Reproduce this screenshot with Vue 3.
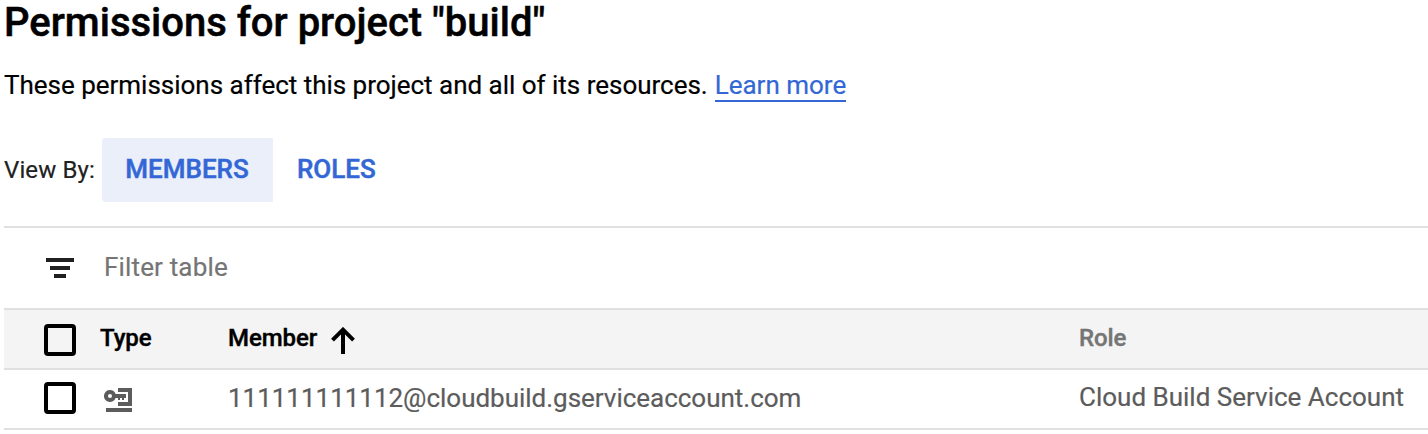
<script setup>
const rows = [
  { member: '111111111112@cloudbuild.gserviceaccount.com', role: 'Cloud Build Service Account' },
]
</script>

<template>
  <main class="page">
    <h1 class="title"><span>Permissions for project "build"</span></h1>
    <p class="intro">
      <span class="intro-text">These permissions affect this project and all of its resources.</span>
      <a class="learn">Learn more</a>
    </p>
    <div class="view">
      <span class="view-label">View By:</span>
      <button class="tab active"><span>MEMBERS</span></button>
      <button class="tab"><span>ROLES</span></button>
    </div>
    <section class="table">
      <div class="filter">
        <svg class="filter-icon" width="28" height="20" viewBox="0 0 28 20">
          <path d="M0 0h28v4H0zM4 8h20v4H4zM8 16h12v4H8z" fill="#212121" />
        </svg>
        <span class="filter-text">Filter table</span>
      </div>
      <div class="row head">
        <span class="check"></span>
        <span class="type">Type</span>
        <span class="member"><span class="member-text">Member</span>
          <svg class="arrow" width="24" height="27" viewBox="0 0 24 27">
            <path d="M12 27V3M1.500 13.200L12 2.700l10.500 10.500" fill="none" stroke="#000" stroke-width="4" />
          </svg>
        </span>
        <span class="role">Role</span>
      </div>
      <div v-for="r in rows" :key="r.member" class="row body">
        <span class="check"></span>
        <span class="type">
          <svg class="key" width="28" height="24" viewBox="0 0 28 24">
            <path d="M14 0h14v18H14v-4h10V4H14zM2 20h26v4H2z" fill="#5c5c5c" />
            <path fill-rule="evenodd" d="M6 2a6 6 0 0 1 5.600 4H22v4h-2v2h-2v-2h-2v2h-2v-2h-2.400A6 6 0 1 1 6 2zM6 6a2 2 0 1 0 0 4 2 2 0 0 0 0-4z" fill="#5c5c5c" />
          </svg>
        </span>
        <span class="member email">{{ r.member }}</span>
        <span class="role">{{ r.role }}</span>
      </div>
    </section>
  </main>
</template>

<style>
body {
  background: #fff;
}
</style>

<style scoped>
.page {
  box-sizing: border-box;
  height: 434px;
  padding-left: 4px;
  overflow: hidden;
  font-family: Roboto, "Liberation Sans", sans-serif;
  font-size: 26px;
  color: #000;
  white-space: nowrap;
  -webkit-text-stroke: 0.2px currentColor;
}
.title {
  margin: 0;
  height: 62px;
  font-size: 40px;
  line-height: 46px;
  font-weight: 500;
  -webkit-text-stroke-width: 0.5px;
}
.intro {
  display: flex;
  align-items: flex-start;
  gap: 7px;
  margin: 0;
  height: 76px;
  line-height: 47px;
}
.intro-text {
  letter-spacing: -0.016px;
}
.learn {
  margin-top: 9px;
  line-height: 29px;
  border-bottom: 2px solid #3367d6;
  color: #3367d6;
}
.view {
  display: flex;
  align-items: center;
  height: 64px;
  margin-bottom: 24px;
}
.view-label {
  width: 98px;
  font-size: 24px;
  letter-spacing: 0.12px;
  color: #212121;
}
.tab {
  height: 64px;
  padding: 0 24px 2px;
  border: 0;
  background: none;
  font: 500 26px Roboto, sans-serif;
  color: #3367d6;
  -webkit-text-stroke: 0.5px #3367d6;
}
.tab.active {
  width: 171px;
  padding: 0 1px 2px 0;
  border-radius: 4px 0 0 4px;
  background: #ebeffa;
}
.table {
  border-top: 2px solid #e0e0e0;
}
.filter {
  display: flex;
  align-items: center;
  height: 80px;
  padding-left: 42px;
}
.filter-text {
  margin: 0 0 2px 30px;
  letter-spacing: 0.16px;
  color: #757575;
}
.row {
  display: grid;
  grid-template-columns: 56px 128px 851px 1fr;
  align-items: center;
  box-sizing: border-box;
  height: 60px;
  padding-left: 40px;
  border-top: 2px solid #e0e0e0;
}
.head {
  background: #f4f4f4;
  font-size: 24px;
  font-weight: 500;
  letter-spacing: -0.08px;
  -webkit-text-stroke-width: 0.4px;
}
.head .type,
.head .member-text,
.head .role {
  padding-bottom: 2px;
}
.body {
  height: 62px;
  border-bottom: 2px solid #e0e0e0;
  color: #5c5c5c;
}
.check {
  box-sizing: border-box;
  width: 32px;
  height: 32px;
  margin-top: 2px;
  border: 4px solid #000;
  border-radius: 4px;
}
.body .check {
  margin-top: -2px;
}
.email {
  padding-bottom: 2px;
  letter-spacing: -0.02px;
}
.body .role {
  padding-bottom: 4px;
}
.head .member {
  display: flex;
  align-items: center;
}
.arrow {
  margin: 3px 0 0 14px;
}
.head .role {
  color: #757575;
}
.key {
  display: block;
  margin: 2px 0 0 4px;
}
</style>
